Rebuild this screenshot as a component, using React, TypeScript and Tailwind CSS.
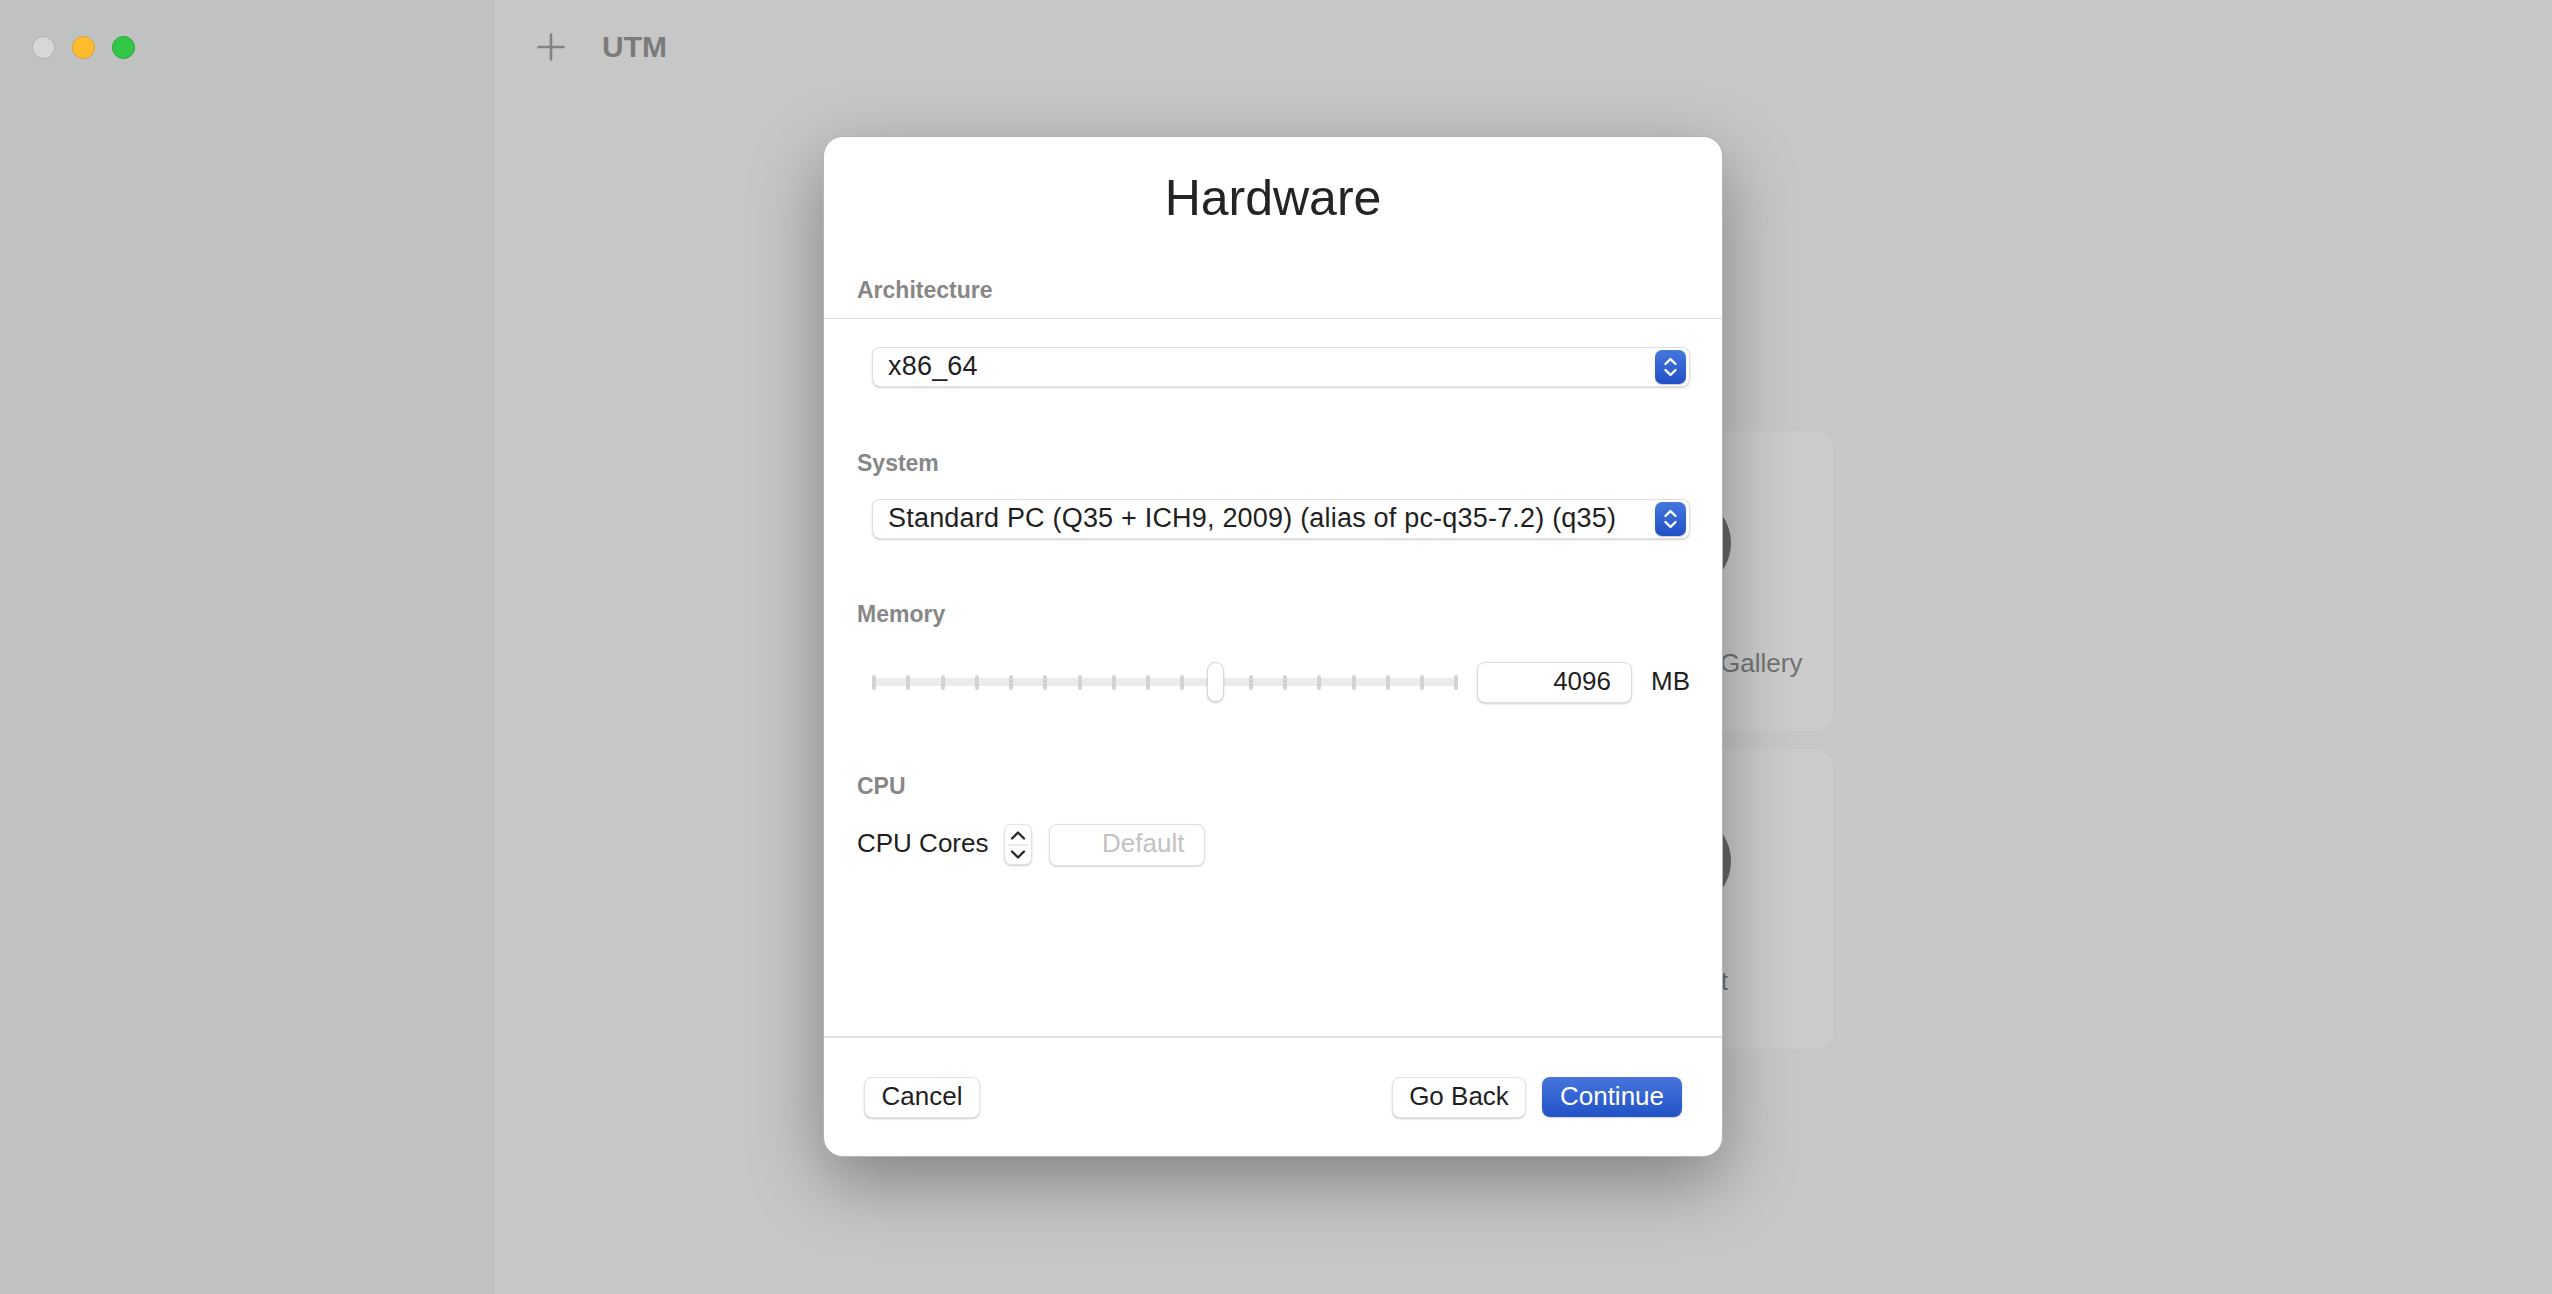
import React from "react";

function PopupChevrons() {
  return (
    <div className="w-[31px] h-[34px] rounded-[7px] bg-linear-to-b from-[#4577de] to-[#2350c6] flex items-center justify-center shadow-[0_1px_1px_rgba(0,0,0,0.2)]">
      <svg width="31" height="34" viewBox="0 0 31 34" fill="none">
        <path d="M10.5 14L15.5 9L20.5 14" stroke="white" strokeWidth="2.4" strokeLinecap="round" strokeLinejoin="round" />
        <path d="M10.5 20L15.5 25L20.5 20" stroke="white" strokeWidth="2.4" strokeLinecap="round" strokeLinejoin="round" />
      </svg>
    </div>
  );
}

function Popup({ value }: { value: string }) {
  return (
    <div className="ml-[48px] mr-[32px] h-[40px] rounded-[8px] bg-white border border-[#e0e0e0] shadow-[0_1px_2px_rgba(0,0,0,0.18)] flex items-center justify-between pl-[15px] pr-[3px]">
      <span className="text-[27px] tracking-[0.2px] leading-[40px] mt-[-2px] text-[#1f1f1f] whitespace-nowrap">{value}</span>
      <PopupChevrons />
    </div>
  );
}

function SectionLabel({ text, className }: { text: string; className: string }) {
  return (
    <div className={`pl-[33px] h-[28px] leading-[26px] text-[23px] font-bold text-[#878787] ${className}`}>
      {text}
    </div>
  );
}

function MemorySlider() {
  const ticks = Array.from({ length: 18 }, (_, i) => i);
  return (
    <div className="relative w-[588px] h-[41px] flex items-center justify-between">
      <div className="absolute left-0 right-0 top-[16px] h-[8px] rounded-full bg-[#ebebeb]" />
      {ticks.map((t) => (
        <div key={t} className="relative w-[4px] h-[15px] rounded-full bg-[#d3d3d3]" />
      ))}
      <div className="absolute left-[335px] top-0 w-[17px] h-[40px] rounded-full bg-white border border-[#d6d6d6] shadow-[0_1px_2px_rgba(0,0,0,0.2)]" />
    </div>
  );
}

function Stepper() {
  return (
    <div className="w-[28px] h-[41px] rounded-[7px] bg-white border border-[#e2e2e2] shadow-[0_1px_2px_rgba(0,0,0,0.2)] flex flex-col">
      <svg width="26" height="39" viewBox="0 0 26 39" fill="none">
        <path d="M7 13.5L13 7.5L19 13.5" stroke="#262626" strokeWidth="2.3" strokeLinecap="round" strokeLinejoin="round" />
        <line x1="3" y1="20" x2="23" y2="20" stroke="#e3e3e3" strokeWidth="1.5" />
        <path d="M7 26.5L13 32.5L19 26.5" stroke="#262626" strokeWidth="2.3" strokeLinecap="round" strokeLinejoin="round" />
      </svg>
    </div>
  );
}

function Button({ label, width, primary }: { label: string; width: string; primary?: boolean }) {
  return primary ? (
    <div className={`${width} h-[40px] rounded-[8px] bg-linear-to-b from-[#4775dc] to-[#2152c7] flex items-center justify-center text-[26px] text-white shadow-[0_1px_2px_rgba(0,0,0,0.2)]`}>
      <span className="mt-[-2px]">{label}</span>
    </div>
  ) : (
    <div className={`${width} h-[41px] rounded-[8px] bg-white border border-[#e4e4e4] shadow-[0_1px_2px_rgba(0,0,0,0.2)] flex items-center justify-center text-[26px] text-[#1f1f1f]`}>
      <span className="mt-[-2px]">{label}</span>
    </div>
  );
}

function WelcomeCard({ title }: { title?: string }) {
  return (
    <div className="w-[301px] h-[300px] rounded-[18px] bg-[#cbcccb] flex flex-col items-center pt-[64px]">
      <div className="w-[96px] h-[96px] rounded-full bg-[#686868]" />
      {title ? (
        <div className="mt-[56px] h-[32px] leading-[32px] text-[26px] text-[#727272] whitespace-nowrap">{title}</div>
      ) : null}
    </div>
  );
}

export default function App() {
  return (
    <div className="w-[2552px] h-[1294px] overflow-hidden flex font-['Liberation_Sans',Arial,sans-serif] relative">
      {/* sidebar */}
      <div className="w-[494px] h-full bg-[#c0c2c1] border-r border-[#bbbdbc] flex flex-col">
        <div className="h-[95px] flex items-start pt-[36px] pl-[32px] gap-[17px]">
          <div className="w-[23px] h-[23px] rounded-full bg-[#d6d7d6] border border-[#b2b3b2]" />
          <div className="w-[23px] h-[23px] rounded-full bg-[#febc2e] border border-[#dfa02a]" />
          <div className="w-[23px] h-[23px] rounded-full bg-[#33c748] border border-[#25a439]" />
        </div>
      </div>

      {/* main window area */}
      <div className="flex-1 h-full bg-[#c6c7c6] flex flex-col">
        <div className="h-[95px] flex items-start pt-[33px] pl-[43px]">
          <svg width="28" height="28" viewBox="0 0 28 28" fill="none">
            <path d="M14 1.5V26.5M1.5 14H26.5" stroke="#828282" strokeWidth="2.6" strokeLinecap="round" />
          </svg>
          <span className="ml-[37px] mt-[-2px] text-[30px] leading-[32px] font-bold text-[#7b7b7b]">UTM</span>
        </div>
        <div className="flex-1 flex justify-center pt-[336px]">
          <div className="grid grid-cols-2 gap-[18px] w-[620px] h-[616px]">
            <WelcomeCard />
            <WelcomeCard title="Browse UTM Gallery" />
            <WelcomeCard />
            <WelcomeCard title="Support" />
          </div>
        </div>
      </div>

      {/* modal sheet */}
      <div className="absolute inset-0 flex items-center justify-center pr-[6px] pb-[2px]">
        <div className="w-[900px] h-[1021px] rounded-[20px] bg-white border border-[#b4b4b4] shadow-[0_24px_70px_rgba(0,0,0,0.35)] flex flex-col">
          <div className="pt-[36px] h-[86px] text-center text-[50px] leading-[50px] text-[#242424]">Hardware</div>

          <SectionLabel text="Architecture" className="mt-[54px]" />
          <div className="mt-[13px] h-px bg-[#dcdcdc]" />
          <div className="mt-[28px]">
            <Popup value="x86_64" />
          </div>

          <SectionLabel text="System" className="mt-[63px]" />
          <div className="mt-[21px]">
            <Popup value="Standard PC (Q35 + ICH9, 2009) (alias of pc-q35-7.2) (q35)" />
          </div>

          <SectionLabel text="Memory" className="mt-[62px]" />
          <div className="mt-[33px] ml-[48px] mr-[32px] flex items-center">
            <MemorySlider />
            <div className="ml-[19px] w-[155px] h-[41px] rounded-[8px] bg-white border border-[#dcdcdc] shadow-[0_1px_2px_rgba(0,0,0,0.18)] flex items-center justify-end pr-[20px] text-[26px] text-[#1f1f1f]">
              <span className="mt-[-2px]">4096</span>
            </div>
            <span className="ml-[19px] mt-[-2px] text-[26px] text-[#1f1f1f]">MB</span>
          </div>

          <SectionLabel text="CPU" className="mt-[70px]" />
          <div className="mt-[23px] pl-[33px] flex items-center h-[42px]">
            <span className="mt-[-2px] text-[26px] text-[#1f1f1f]">CPU Cores</span>
            <div className="ml-[16px]">
              <Stepper />
            </div>
            <div className="ml-[17px] w-[156px] h-[42px] rounded-[8px] bg-white border border-[#e0e0e0] shadow-[0_1px_2px_rgba(0,0,0,0.16)] flex items-center justify-end pr-[20px] text-[26px] text-[#c2c2c2]">
              <span className="mt-[-2px]">Default</span>
            </div>
          </div>

          <div className="flex-1" />
          <div className="h-[2px] bg-[#e2e2e2]" />
          <div className="mt-[39px] mb-[38px] px-[40px] flex items-center justify-between h-[41px]">
            <Button label="Cancel" width="w-[116px]" />
            <div className="flex items-center gap-[16px]">
              <Button label="Go Back" width="w-[134px]" />
              <Button label="Continue" width="w-[140px]" primary />
            </div>
          </div>
        </div>
      </div>
    </div>
  );
}
